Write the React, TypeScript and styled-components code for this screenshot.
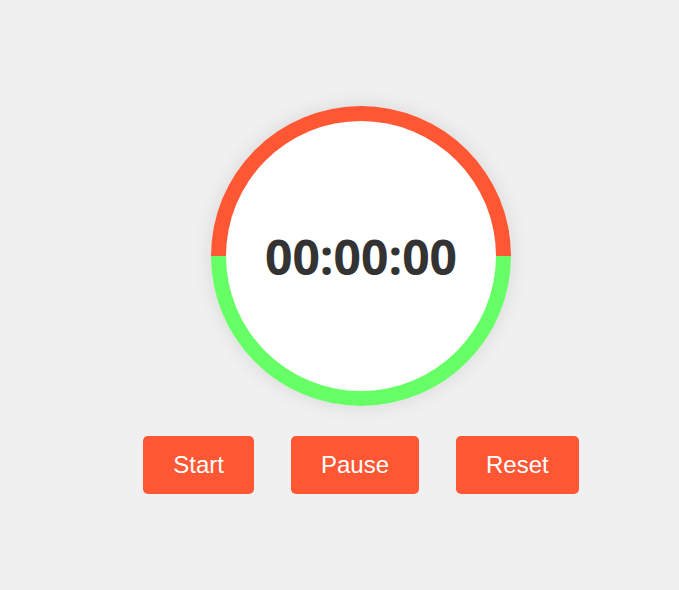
import React from 'react';
import styled, { createGlobalStyle } from 'styled-components';

const GlobalStyle = createGlobalStyle`
    html, body {
        margin: 0;
        padding: 0;
        background: #f0f0f0;
    }
`;

const Page = styled.div`
    width: 679px;
    height: 590px;
    box-sizing: border-box;
    padding: 106px 0 0 43px;
    display: flex;
    flex-direction: column;
    align-items: center;
    font-family: 'Liberation Sans', Arial, sans-serif;
`;

const Dial = styled.div`
    width: 300px;
    height: 300px;
    box-sizing: border-box;
    padding: 15px;
    border-radius: 50%;
    background: linear-gradient(to bottom, #ff5733 50%, #66ff66 50%);
    box-shadow: 0 0 20px rgba(0, 0, 0, 0.1);
`;

const Face = styled.div`
    width: 100%;
    height: 100%;
    border-radius: 50%;
    background: #fff;
    display: flex;
    align-items: center;
    justify-content: center;
`;

const Time = styled.span`
    font-family: 'Open Sans', sans-serif;
    font-weight: bold;
    font-size: 48px;
    color: #333;
`;

const Controls = styled.div`
    display: flex;
    gap: 37px;
    margin-top: 30px;
`;

const Button = styled.button`
    font-family: 'Liberation Sans', Arial, sans-serif;
    font-size: 24px;
    line-height: 28px;
    padding: 15px 30px;
    border: none;
    border-radius: 5px;
    background: #ff5733;
    color: #fff;
    cursor: pointer;
`;

export default function App() {
    return (
        <>
            <GlobalStyle />
            <Page>
                <Dial>
                    <Face>
                        <Time>00:00:00</Time>
                    </Face>
                </Dial>
                <Controls>
                    <Button>Start</Button>
                    <Button>Pause</Button>
                    <Button>Reset</Button>
                </Controls>
            </Page>
        </>
    );
}
